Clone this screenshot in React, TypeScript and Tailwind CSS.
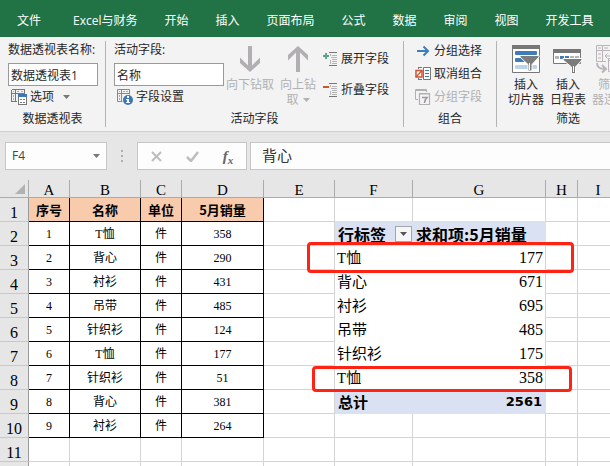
import type { ReactNode } from 'react';

const tabs = ['开始', '插入', '页面布局', '公式', '数据', '审阅', '视图', '开发工具'];

const products = [
  ['1', 'T恤', '件', '358'],
  ['2', '背心', '件', '290'],
  ['3', '衬衫', '件', '431'],
  ['4', '吊带', '件', '485'],
  ['5', '针织衫', '件', '124'],
  ['6', 'T恤', '件', '177'],
  ['7', '针织衫', '件', '51'],
  ['8', '背心', '件', '381'],
  ['9', '衬衫', '件', '264'],
];

const pivotRows: Record<number, [string, string]> = {
  3: ['T恤', '177'],
  4: ['背心', '671'],
  5: ['衬衫', '695'],
  6: ['吊带', '485'],
  7: ['针织衫', '175'],
  8: ['T恤', '358'],
};

const GRID = 'border-[#d4d4d4]';
const FILL = 'border-[#d9e1f2]';

function Group({ label, className, children }: { label: string; className: string; children: ReactNode }) {
  return (
    <section className={`flex h-[86px] shrink-0 flex-col justify-between ${className}`}>
      {children}
      <h2 className="text-center leading-4">{label}</h2>
    </section>
  );
}

function OptionsIcon() {
  return (
    <svg width="16" height="16" viewBox="0 0 16 16" shapeRendering="crispEdges">
      <path d="M.5 .5h13v5M.5 .5v12h5M.5 4.5h13M4.5 .5v12" fill="none" stroke="#777" />
      <path d="M2 2h1v1H2zM6 2h2v1H6zM10 2h2v1h-2zM2 6h1v2H2zM2 9h1v2H2z" fill="#aaa" />
      <path d="M7 6h9v10H7z" fill="#fff" />
      <path d="M7.500 6.500h8v9h-8z" fill="#fff" stroke="#777" />
      <path d="M7 5h9v3H7z" fill="#3f76b5" />
      <path d="M9 10h2v1H9zM12 10h2v1h-2zM9 13h2v1H9zM12 13h2v1h-2z" fill="#777" />
    </svg>
  );
}

function FieldSettingsIcon() {
  return (
    <svg width="16" height="16" viewBox="0 0 16 16">
      <path d="M.5 .5h12v5M.5 .5v12h5M.5 4.500h12M4.500 .5v12" fill="none" stroke="#888" />
      <path d="M2 2h1v1H2zM6 2h2v1H6zM9 2h2v1H9zM2 6h1v2H2zM2 9h1v2H2z" fill="#aaa" />
      <circle cx="11" cy="11" r="5" fill="#3f76b5" />
      <path d="M10 7h2v2h-2zM9 10h3v3h1v1H9v-1h1v-2H9z" fill="#fff" />
    </svg>
  );
}

function DrillArrow({ up }: { up?: boolean }) {
  return (
    <svg width="22" height="26" viewBox="0 0 22 26" className={up ? 'rotate-180' : ''}>
      <path d="M9 0h4v19.500l8-8v5.500L11 26 1 17v-5.500l8 8z" fill="#b1afb1" />
    </svg>
  );
}

function ExpandIcon({ minus }: { minus?: boolean }) {
  return (
    <svg width="14" height="14" viewBox="0 0 14 14" shapeRendering="crispEdges">
      {minus ? <path d="M0 3h6v2H0z" fill="#d35230" /> : <path d="M0 3h2V1h2v2h2v2H4v2H2V5H0z" fill="#5da58a" />}
      <path d="M6 0h8v1H6zM6 13h8v1H6z" fill="#777" />
      <path d="M9 3h5v1H9zM8 5h6v1H8zM9 7h5v1H9zM9 9h5v1H9zM9 11h5v1H9zM7 2h1v2H7zM7 8h1v4H7z" fill="#b5b5b5" />
    </svg>
  );
}

function GroupArrowIcon() {
  return (
    <svg width="16" height="16" viewBox="0 0 16 16">
      <path d="M2 8h10M8.500 3.500L13 8l-4.500 4.500" fill="none" stroke="#3f7cba" strokeWidth="2" />
    </svg>
  );
}

function UngroupIcon() {
  return (
    <svg width="16" height="16" viewBox="0 0 16 16">
      <path d="M3 1.500h4M3.500 1v2M3 13.500h4M3.500 14v-2" fill="none" stroke="#777" />
      <path d="M1 4.500h6v6.500H1z" fill="#fff" stroke="#d35230" strokeWidth="1.500" />
      <path d="M1 11l6-6.500" stroke="#d35230" strokeWidth="1.200" />
      <path d="M8.500 1.500h7v12h-7z" fill="#fff" stroke="#777" />
      <path d="M10 4.500h4M10 7.500h4M10 10.500h4" stroke="#3f7cba" />
    </svg>
  );
}

function GroupFieldIcon() {
  return (
    <svg width="16" height="16" viewBox="0 0 16 16">
      <path d="M3 10.500H.5V.5h11V3M.5 1.500h11" fill="none" stroke="#b1b1b1" />
      <path d="M4.500 4.500h10v11h-10zM4 5h11" fill="#f8f2f8" stroke="#b1b1b1" strokeWidth="1.200" />
      <path d="M7 8.500h5c-1.500 1.500-2.500 3-2.500 5.500" fill="none" stroke="#999" strokeWidth="1.600" />
    </svg>
  );
}

function SlicerIcon() {
  return (
    <svg width="28" height="28" viewBox="0 0 28 28">
      <path d="M.5 .5h27v27H.5z" fill="#fff" stroke="#777" />
      <path d="M0 0h28v4H0z" fill="#777" />
      <rect x="3" y="6" width="22" height="4" rx="1" fill="#3f7cba" />
      <rect x="3" y="13" width="12" height="4" rx="1" fill="#3f7cba" />
      <rect x="3" y="20" width="22" height="4" rx="1" fill="#bdd3ea" />
      <path d="M8 10.500h19v1.500l-7 7.500V26h-4v-6.500L8 12z" fill="#7c7c7c" stroke="#fff" />
      <path d="M17.500 18v7" stroke="#fff" />
    </svg>
  );
}

function TimelineIcon() {
  return (
    <svg width="30" height="28" viewBox="0 0 30 28">
      <path d="M.5 4.500h27v14H.5z" fill="#fff" stroke="#777" />
      <path d="M0 4h28v4H0z" fill="#777" />
      <path d="M2 11h4v3H2zM17 11h4v3h-4zM22 11h4v3h-4z" fill="#b5b5b5" />
      <path d="M7 11h4v3H7zM12 11h4v3h-4z" fill="#3f7cba" />
      <path d="M10 13.500h19v1.500l-6.500 7V29h-4v-7L10 15z" fill="#7c7c7c" stroke="#fff" />
      <path d="M20.500 21v6" stroke="#fff" />
    </svg>
  );
}

function ConnectionIcon() {
  return (
    <svg width="28" height="28" viewBox="0 0 28 28" fill="none" stroke="#b8b4b8">
      <path d="M10 16.500H.5V.5h24v10M.5 5.500h24M6.500 .5v16" />
      <path d="M2 2h3v2H2zM8 2h4v2H8zM14 2h4v2h-4zM2 8h3v2H2zM2 12h3v2H2z" fill="#d8d0d8" stroke="none" />
      <path d="M9 11h7M11.500 8.500L9 11l2.500 2.500M16 7v7" />
      <path d="M12.500 13.500h13v13h-13zM12 15.500h13M15 18.500h8M15 21.500h8" fill="#f6f0f6" />
      <path d="M1 18c0 5 3 6 8 6M6 20l4 4-4 3.500" strokeWidth="2" />
    </svg>
  );
}

function Caret({ className }: { className: string }) {
  return (
    <svg width="7" height="4" viewBox="0 0 7 4" className={className}>
      <path d="M0 0h7L3.500 4z" fill="currentColor" />
    </svg>
  );
}

function Ribbon() {
  return (
    <div className="flex shrink-0 overflow-hidden border-b border-[#d0d0d0] bg-[#f3f3f3] pt-1 pb-1 text-[#262626]">
      <Group label="数据透视表" className="w-[106px] border-r border-[#b4b4b4]">
        <div className="flex flex-col px-2 pt-px">
          <label htmlFor="pivot-name" className="leading-4 whitespace-nowrap">数据透视表名称:</label>
          <input id="pivot-name" defaultValue="数据透视表1" className="mt-[5px] h-[23px] w-[90px] border border-[#9a9a9a] bg-white px-[2px]" />
          <button className="mt-[3px] ml-[3px] flex h-4 items-center gap-[3px]">
            <OptionsIcon />
            选项
            <Caret className="ml-[6px] text-[#777]" />
          </button>
        </div>
      </Group>

      <Group label="活动字段" className="w-[298px] border-r border-[#b4b4b4]">
        <div className="flex pt-px pl-2">
          <div className="flex w-[110px] shrink-0 flex-col">
            <label htmlFor="active-field" className="leading-4">活动字段:</label>
            <input id="active-field" defaultValue="名称" className="mt-[5px] h-[23px] w-full border border-[#9a9a9a] bg-white px-[2px]" />
            <button className="mt-[3px] ml-[3px] flex h-4 items-center gap-[3px]">
              <FieldSettingsIcon />
              字段设置
            </button>
          </div>
          <button disabled className="flex w-[52px] shrink-0 flex-col items-center gap-[5px] pt-1 leading-[15px] text-[#b1b1b1]">
            <DrillArrow />
            向下钻取
          </button>
          <button disabled className="flex w-[44px] shrink-0 flex-col items-center pt-1 leading-[15px] text-[#b1b1b1]">
            <DrillArrow up />
            <span className="mt-[5px]">向上钻</span>
            <span className="flex items-center gap-1">
              取 <Caret className="text-[#b1b1b1]" />
            </span>
          </button>
          <div className="flex flex-col gap-[15px] pt-[9px] pl-[3px]">
            <button className="flex h-4 items-center gap-1"><ExpandIcon />展开字段</button>
            <button className="flex h-4 items-center gap-1"><ExpandIcon minus />折叠字段</button>
          </div>
        </div>
      </Group>

      <Group label="组合" className="w-[93px] border-r border-[#b4b4b4]">
        <div className="flex flex-col items-start gap-[7px] pt-[2px] pl-[11px]">
          <button className="flex h-4 items-center gap-[3px]"><GroupArrowIcon />分组选择</button>
          <button className="flex h-4 items-center gap-[3px]"><UngroupIcon />取消组合</button>
          <button disabled className="flex h-4 items-center gap-[3px] text-[#b1b1b1]"><GroupFieldIcon />分组字段</button>
        </div>
      </Group>

      <Group label="筛选" className="ml-2">
        <div className="flex pt-1 leading-[15px]">
          <button className="flex w-[42px] flex-col items-center"><SlicerIcon /><span className="mt-1">插入<br />切片器</span></button>
          <button className="flex w-[42px] flex-col items-center"><TimelineIcon /><span className="mt-1">插入<br />日程表</span></button>
          <button disabled className="flex w-[42px] flex-col items-center text-[#b1b1b1]"><ConnectionIcon /><span className="mt-1">筛选<br />器连接</span></button>
        </div>
      </Group>
    </div>
  );
}

function FormulaBar() {
  return (
    <div className="flex shrink-0 py-[10px] pl-[5px]">
      <div className="flex h-7 w-[102px] shrink-0 items-center border border-[#c6c6c6] bg-[#fdfdfd] pr-[6px]">
        <input aria-label="名称框" defaultValue="F4" className="w-full min-w-0 bg-transparent pl-[6px] text-[#444]" />
        <button aria-label="展开名称框"><Caret className="text-[#777]" /></button>
      </div>
      <div className="flex w-[30px] shrink-0 flex-col items-center justify-center gap-[3px]">
        <i className="size-[2px] bg-[#b0b0b0]" />
        <i className="size-[2px] bg-[#b0b0b0]" />
        <i className="size-[2px] bg-[#b0b0b0]" />
      </div>
      <div className="flex h-7 w-[110px] shrink-0 items-center border border-[#c6c6c6] bg-[#fdfdfd]">
        <button aria-label="取消" className="flex flex-1 justify-center">
          <svg width="11" height="11" viewBox="0 0 11 11"><path d="M1 1l9 9M10 1l-9 9" stroke="#bdbdbd" strokeWidth="2" /></svg>
        </button>
        <button aria-label="输入" className="flex flex-1 justify-center">
          <svg width="13" height="11" viewBox="0 0 13 11"><path d="M1 6l4 4 7-9" fill="none" stroke="#bdbdbd" strokeWidth="2.500" /></svg>
        </button>
        <button aria-label="插入函数" className="flex-1 font-['Liberation_Serif',serif] text-[15px] leading-4 font-bold text-[#666] italic">
          f<sub className="text-[11px]">x</sub>
        </button>
      </div>
      <input aria-label="编辑栏" defaultValue="背心" className="ml-[3px] h-7 min-w-0 flex-1 border border-r-0 border-[#c6c6c6] bg-[#fdfdfd] px-[11px] pb-1 text-[15px] text-[#333]" />
    </div>
  );
}

function ProductCells({ row }: { row: number }) {
  if (row === 1) {
    return ['序号', '名称', '单位', '5月销量'].map((title) => (
      <td key={title} className="border-r border-b border-black bg-[#f8cbad] text-center font-['Noto_Sans_CJK_SC',sans-serif] text-[13px] font-bold">{title}</td>
    ));
  }
  const product = products[row - 2];
  return [0, 1, 2, 3].map((i) => (
    <td key={i} className={`border-r border-b text-center text-[12px] ${product ? 'border-black' : GRID}`}>{product?.[i]}</td>
  ));
}

function PivotCells({ row }: { row: number }) {
  if (row === 2) {
    return (
      <>
        <td className="border-r border-b border-[#d9e1f2] bg-[#d9e1f2] pl-[3px]">
          <div className="flex items-center justify-between font-['Noto_Sans_CJK_SC',sans-serif] text-[16px] leading-5 font-bold whitespace-nowrap">
            行标签
            <button aria-label="筛选行标签" className="flex h-4 w-[17px] shrink-0 items-center justify-center border border-[#a5a5a5] bg-[#f5f6f8]">
              <Caret className="text-[#555]" />
            </button>
          </div>
        </td>
        <td className={`border-r border-b bg-[#d9e1f2] pl-[3px] font-['Noto_Sans_CJK_SC',sans-serif] text-[16px] font-bold whitespace-nowrap ${FILL}`}>求和项:5月销量</td>
      </>
    );
  }
  if (row === 9) {
    return (
      <>
        <td className={`border-r border-b bg-[#d9e1f2] pl-[3px] font-['Noto_Sans_CJK_SC',sans-serif] text-[15px] font-bold ${FILL}`}>总计</td>
        <td className={`border-r border-b bg-[#d9e1f2] pr-[3px] text-right font-['DejaVu_Sans',sans-serif] text-[13px] font-bold ${FILL}`}>2561</td>
      </>
    );
  }
  const item = pivotRows[row];
  if (item) {
    const bottom = row === 8 ? 'border-b-[#d9e1f2]' : 'border-b-white';
    return (
      <>
        <td className={`border-r border-b border-r-white pl-[2px] text-[15px] ${bottom}`}>{item[0]}</td>
        <td className={`border-r border-b border-r-[#d4d4d4] pr-[2px] text-right text-[16px] ${bottom}`}>{item[1]}</td>
      </>
    );
  }
  const bottom = row === 1 ? 'border-b-[#d9e1f2]' : 'border-b-[#d4d4d4]';
  return (
    <>
      <td className={`border-r border-b border-r-[#d4d4d4] ${bottom}`} />
      <td className={`border-r border-b border-r-[#d4d4d4] ${bottom}`} />
    </>
  );
}

function Sheet() {
  return (
    <div className="relative min-h-0 flex-1 overflow-hidden bg-white">
      <table className="w-full table-fixed border-separate border-spacing-0 font-['Liberation_Serif','Noto_Sans_CJK_SC',serif] leading-5 text-black">
        <colgroup>
          <col className="w-[29px]" />
          <col className="w-[41px]" />
          <col className="w-[71px]" />
          <col className="w-[41px]" />
          <col className="w-[82px]" />
          <col className="w-[71px]" />
          <col className="w-[78px]" />
          <col className="w-[133px]" />
          <col className="w-[32px]" />
          <col />
        </colgroup>
        <thead>
          <tr className="h-[18px] bg-[#e6e6e6]">
            <th className="border-r border-b border-[#ababab] p-0">
              <svg width="10" height="10" viewBox="0 0 10 10" className="mr-[3px] ml-auto"><path d="M10 0v10H0z" fill="#b2b2b2" /></svg>
            </th>
            {['A', 'B', 'C', 'D', 'E', 'F', 'G', 'H'].map((letter) => (
              <th key={letter} scope="col" className="border-r border-b border-[#ababab] pt-[3px] text-[15px] leading-[14px] font-normal">{letter}</th>
            ))}
            <th scope="col" className="border-b border-[#ababab] pt-[3px] pl-2 text-[15px] leading-[14px] font-normal">I</th>
          </tr>
        </thead>
        <tbody>
          {[1, 2, 3, 4, 5, 6, 7, 8, 9, 10, 11, 12].map((row) => (
            <tr key={row} className="h-6">
              <th scope="row" className="border-r border-b border-r-[#9b9b9b] border-b-[#c8c8c8] bg-[#e6e6e6] align-bottom text-[16px] leading-4 font-normal">{row < 12 && row}</th>
              <ProductCells row={row} />
              <td className={`border-r border-b ${GRID}`} />
              <PivotCells row={row} />
              <td className={`border-r border-b ${GRID}`} />
              <td className={`border-b ${GRID}`} />
            </tr>
          ))}
        </tbody>
      </table>
      <div className="pointer-events-none absolute top-[62px] left-[307px] h-[31px] w-[267px] rounded-[4px] border-3 border-[#ff2314]" />
      <div className="pointer-events-none absolute top-[186px] left-[312px] h-[26px] w-[260px] rounded-[4px] border-3 border-[#ff2314]" />
    </div>
  );
}

export default function App() {
  return (
    <div className="flex h-screen flex-col overflow-hidden bg-[#e6e6e6] font-['Open_Sans','Noto_Sans_CJK_SC',sans-serif] text-[12px] leading-4">
      <nav className="flex shrink-0 gap-[27px] overflow-hidden bg-[#217346] pt-[13px] pb-2 pl-[17px] whitespace-nowrap text-white">
        <button>文件</button>
        <button className="pl-[5px]">Excel与财务</button>
        {tabs.map((tab) => <button key={tab}>{tab}</button>)}
      </nav>
      <Ribbon />
      <FormulaBar />
      <Sheet />
    </div>
  );
}
